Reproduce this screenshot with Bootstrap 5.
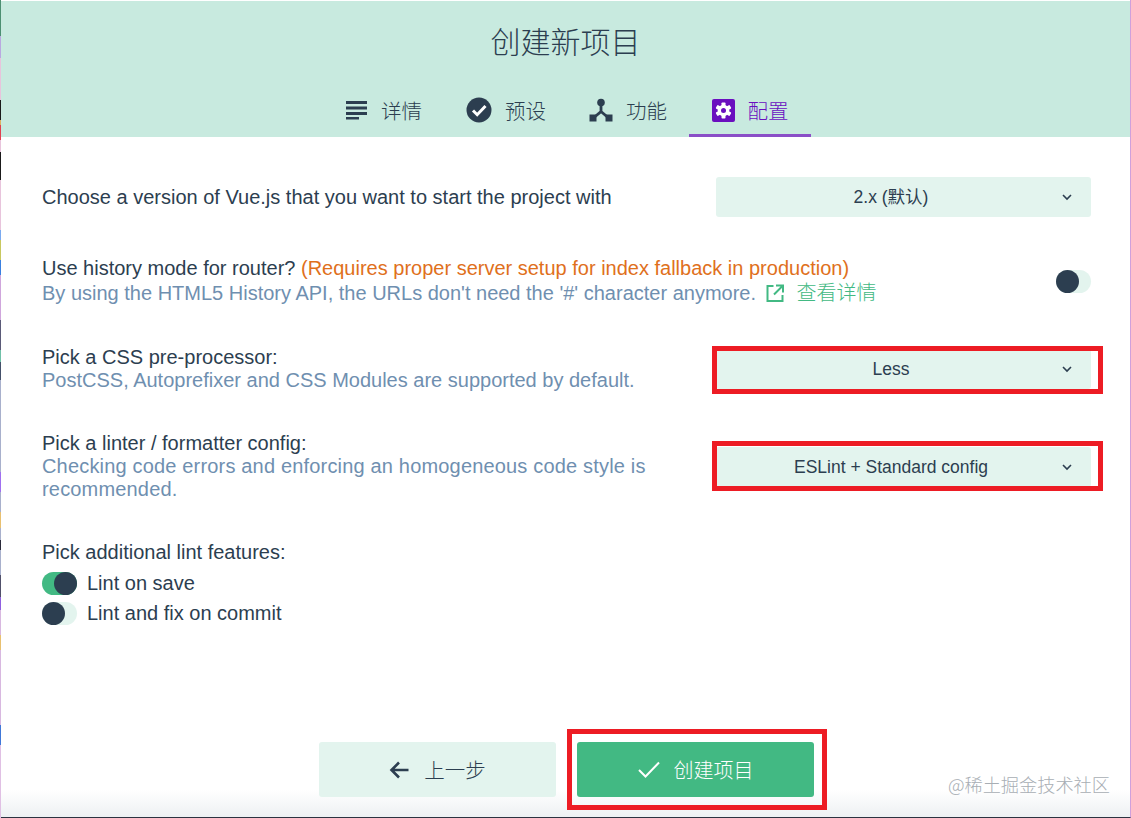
<!DOCTYPE html>
<html lang="en">
  <head>
    <meta charset="UTF-8" />
    <meta name="viewport" content="width=device-width, initial-scale=1.0" />
    <title>创建新项目</title>
    <link href="https://cdn.jsdelivr.net/npm/bootstrap@5.3.0/dist/css/bootstrap.min.css" rel="stylesheet" />
    <style>
      html, body { height: 100%; overflow: hidden; }
      body {
        background: #fff;
        color: #2c3e50;
        font-family: "Liberation Sans", "Noto Sans CJK SC", sans-serif;
        font-size: 20px;
        line-height: 23px;
      }
      .app-window {
        height: 818px;
        display: flex;
        flex-direction: column;
        position: relative;
        border-left: 1px solid #cdb4dc;
        border-right: 1px solid #cfa0dc;
        border-bottom: 1px solid #2c3340;
        background: linear-gradient(#fff 790px, #eef1f3 816px);
      }
      .side-strip {
        position: absolute;
        left: -1px; top: 0;
        width: 1px; height: 818px;
        background: linear-gradient(#4d8f72 0 36px, #b9a9e0 36px 58px, #e8c4dc 58px 100px, #1a1a1a 100px 120px, #dcb060 120px 125px, #e04050 125px 140px, #e8c4dc 140px 152px, #1a1a1a 152px 180px, #e8c4dc 180px 230px, #7aaaf0 230px 240px, #c8c860 240px 260px, #3a80e0 260px 275px, #cfa6dc 275px 320px, #5a5a78 320px 350px, #70c0a8 350px 362px, #44506a 362px 380px, #a8b0cc 380px 472px, #a070f0 472px 492px, #a8b0cc 492px 512px, #e8c070 512px 528px, #a8b0cc 528px 540px, #2a2a3a 540px 550px, #a8b0cc 550px 575px, #50506a 575px 597px, #9060e0 597px 610px, #d8b8e0 610px 635px, #e8c070 635px 650px, #d8b8e0 650px 725px, #4078d8 725px 745px, #e0c0e4 745px);
      }
      .wizard-head {
        height: 136px;
        margin-top: 1px;
        background: #c8eadf;
        flex-shrink: 0;
      }
      .wizard-title {
        font-size: 30px;
        line-height: 40px;
        font-weight: 300;
        padding-top: 19px;
        margin: 0;
        text-align: center;
        font-family: "Noto Sans CJK SC", sans-serif;
      }
      .wizard-tabs { margin-top: 30px; margin-left: 3px; }
      .wizard-tab {
        width: 122px;
        height: 47px;
        display: flex;
        align-items: center;
        justify-content: center;
        gap: 13px;
        font-size: 20.5px;
        color: #2c3e50;
        padding-bottom: 7px;
        font-family: "Noto Sans CJK SC", sans-serif;
        font-weight: 300;
      }
      .wizard-tab.is-on { color: #6a0fbf; border-bottom: 3px solid #8a4fc7; padding-bottom: 4px; }
      .form-area { padding: 40px 39px 0 41px; flex-grow: 1; }
      .form-line { display: flex; justify-content: space-between; align-items: center; }
      .line-gap { margin-top: 41px; }
      .line-text { width: 640px; }
      .muted-blue { color: #6f8fb0; }
      .warn-orange { color: #e0701c; }
      .wide-copy { letter-spacing: 0.175px; }
      .more-link { color: #42b983; text-decoration: none; font-family: "Noto Sans CJK SC", sans-serif; font-weight: 300; margin-left: 4px; }
      .more-link svg { margin-right: 13px; vertical-align: -2px; }
      .fake-select {
        position: relative;
        width: 375px;
        height: 40px;
        padding-right: 25px;
        background: #e3f4ee;
        border-radius: 3px;
        font-size: 17.5px;
        display: flex;
        align-items: center;
        justify-content: center;
        flex-shrink: 0;
      }
      .fake-select.nudge-down { padding-top: 2px; }
      .fake-select > svg { position: absolute; right: 19px; top: 17px; }
      .red-frame {
        position: absolute;
        border: 5px solid #ed1c24;
        pointer-events: none;
      }
      .frame-less { left: -4px; right: -12px; top: -3px; bottom: -5px; }
      .frame-lint { left: -4px; right: -12px; top: -6px; bottom: -4px; }
      .frame-go { left: -10px; right: -13px; top: -13px; bottom: -13px; }
      .mini-switch {
        width: 35px;
        height: 23px;
        border-radius: 12px;
        background: #e3f4ee;
        position: relative;
        display: inline-block;
        flex-shrink: 0;
      }
      .mini-switch::after {
        content: "";
        position: absolute;
        left: 0; top: 0;
        width: 23px; height: 23px;
        border-radius: 50%;
        background: #2c3e50;
      }
      .mini-switch.is-on { background: #42b983; }
      .mini-switch.is-on::after { left: 12px; }
      .check-head { margin-top: 40px; margin-bottom: 8px; }
      .check-row { display: flex; align-items: center; gap: 10px; margin-top: 7px; }
      .wizard-foot { height: 55px; margin-bottom: 20px; gap: 21px; position: relative; left: 1px; }
      .foot-btn {
        width: 237px;
        border-radius: 3px;
        border: 0;
        font-size: 20px;
        display: flex;
        align-items: center;
        justify-content: center;
        gap: 14px;
        font-family: "Noto Sans CJK SC", sans-serif;
        font-weight: 300;
        position: relative;
      }
      .foot-back { background: #e3f4ee; color: #2c3e50; font-size: 20.5px; gap: 15px; }
      .foot-go { background: #42b983; color: #fff; }
      .watermark {
        position: absolute;
        right: 20px; bottom: 21px;
        color: #a8aeb4;
        font-size: 18.2px;
        font-family: "Noto Sans CJK SC", sans-serif;
        font-weight: 300;
      }
    </style>
  </head>
  <body>
    <div class="app-window">
      <div class="side-strip"></div>

      <div class="wizard-head">
        <h1 class="wizard-title">创建新项目</h1>
        <div class="wizard-tabs d-flex justify-content-center">
          <div class="wizard-tab">
            <svg width="22" height="20" viewBox="0 0 22 20" fill="#2c3e50"><rect y="1" width="21" height="3"/><rect y="6.500" width="21" height="3"/><rect y="12" width="21" height="3"/><rect y="17" width="13" height="2.500"/></svg>
            <span>详情</span>
          </div>
          <div class="wizard-tab">
            <svg width="26" height="26" viewBox="0 0 26 26"><circle cx="13" cy="13" r="12.500" fill="#2c3e50"/><path d="M7 13.500l4.200 4.200L19.500 9" fill="none" stroke="#fff" stroke-width="3"/></svg>
            <span>预设</span>
          </div>
          <div class="wizard-tab">
            <svg width="24" height="24" viewBox="0 0 24 24"><circle cx="12" cy="4.500" r="3.800" fill="#2c3e50"/><rect x="0.500" y="16.500" width="7" height="7" fill="#2c3e50"/><rect x="16.500" y="16.500" width="7" height="7" fill="#2c3e50"/><path d="M12 7v6.500L5 19.500M12 13.500l7 6" fill="none" stroke="#2c3e50" stroke-width="2.800"/></svg>
            <span>功能</span>
          </div>
          <div class="wizard-tab is-on">
            <svg width="23" height="23" viewBox="0 0 23 23">
              <rect width="23" height="23" rx="2" fill="#6a0fbf"/>
              <g fill="#fff">
                <rect x="9.500" y="3.500" width="4" height="16" rx="0.800"/>
                <rect x="9.500" y="3.500" width="4" height="16" rx="0.800" transform="rotate(60 11.500 11.500)"/>
                <rect x="9.500" y="3.500" width="4" height="16" rx="0.800" transform="rotate(120 11.500 11.500)"/>
                <circle cx="11.500" cy="11.500" r="5.800"/>
              </g>
              <circle cx="11.500" cy="11.500" r="2.500" fill="#6a0fbf"/>
            </svg>
            <span>配置</span>
          </div>
        </div>
      </div>

      <div class="form-area">
        <div class="form-line">
          <div class="line-text">Choose a version of Vue.js that you want to start the project with</div>
          <div class="fake-select">2.x (默认)
            <svg width="10" height="7" viewBox="0 0 10 7"><path d="M1 1l4 4 4-4" fill="none" stroke="#2c3e50" stroke-width="1.600"/></svg>
          </div>
        </div>

        <div class="form-line" style="margin-top:40px">
          <div class="flex-grow-1">
            <div>Use history mode for router? <span class="warn-orange">(Requires proper server setup for index fallback in production)</span></div>
            <div class="muted-blue">By using the HTML5 History API, the URLs don't need the '#' character anymore.
              <a class="more-link" href="#"><svg width="18" height="18" viewBox="0 0 18 18" fill="none" stroke="#42b983" stroke-width="2"><path d="M7.500 2H1.500v15h15v-6M10 1.500h7v7M16.500 2L8 10.500"/></svg>查看详情</a>
            </div>
          </div>
          <span class="mini-switch"></span>
        </div>

        <div class="form-line line-gap">
          <div class="line-text">
            <div>Pick a CSS pre-processor:</div>
            <div class="muted-blue">PostCSS, Autoprefixer and CSS Modules are supported by default.</div>
          </div>
          <div class="fake-select">Less
            <svg width="10" height="7" viewBox="0 0 10 7"><path d="M1 1l4 4 4-4" fill="none" stroke="#2c3e50" stroke-width="1.600"/></svg>
            <div class="red-frame frame-less"></div>
          </div>
        </div>

        <div class="form-line" style="margin-top:40px">
          <div class="line-text">
            <div>Pick a linter / formatter config:</div>
            <div class="muted-blue wide-copy">Checking code errors and enforcing an homogeneous code style is recommended.</div>
          </div>
          <div class="fake-select nudge-down">ESLint + Standard config
            <svg width="10" height="7" viewBox="0 0 10 7"><path d="M1 1l4 4 4-4" fill="none" stroke="#2c3e50" stroke-width="1.600"/></svg>
            <div class="red-frame frame-lint"></div>
          </div>
        </div>

        <div class="check-head">Pick additional lint features:</div>
        <div class="check-row"><span class="mini-switch is-on"></span><span>Lint on save</span></div>
        <div class="check-row"><span class="mini-switch"></span><span>Lint and fix on commit</span></div>
      </div>

      <div class="wizard-foot d-flex justify-content-center">
        <button class="foot-btn foot-back" type="button">
          <svg width="20" height="18" viewBox="0 0 20 18" fill="none" stroke="#2c3e50" stroke-width="2.600"><path d="M19.500 9H2.500M10 1.500L2.500 9l7.500 7.500"/></svg>
          <span>上一步</span>
        </button>
        <button class="foot-btn foot-go" type="button">
          <svg width="22" height="17" viewBox="0 0 22 17" fill="none" stroke="#fff" stroke-width="2"><path d="M1 9l6.500 6.500L21 1.500"/></svg>
          <span>创建项目</span>
          <div class="red-frame frame-go"></div>
        </button>
      </div>

      <div class="watermark">@稀土掘金技术社区</div>
    </div>
  </body>
</html>
